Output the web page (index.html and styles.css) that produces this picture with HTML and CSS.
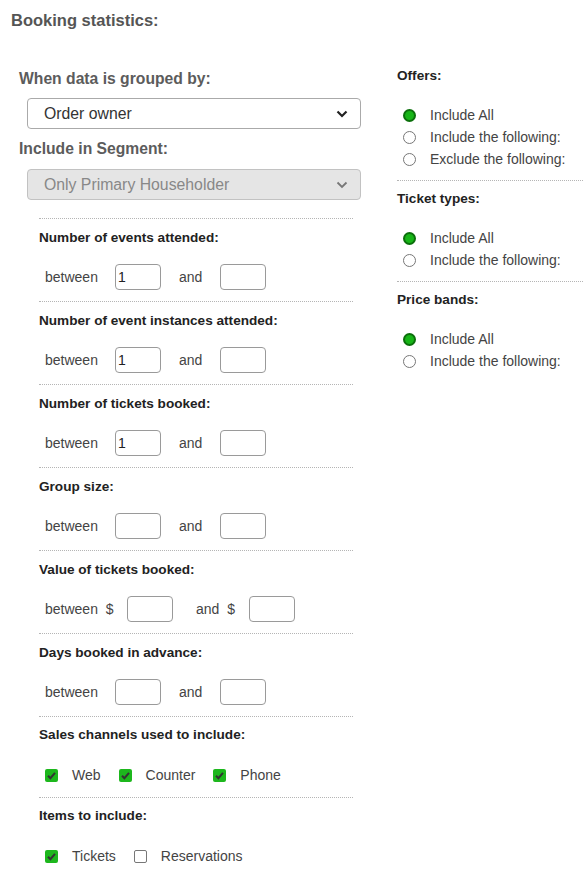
FILE: index.html
```html
<!DOCTYPE html>
<html lang="en">
<head>
  <meta charset="UTF-8">
  <title>Booking statistics</title>
  <meta name="viewport" content="width=device-width, initial-scale=1.0">
  <link rel="stylesheet" href="styles.css">
</head>
<body>
  <div class="page">
    <h2 class="title">Booking statistics:</h2>
    <div class="columns">
      <!-- left: grouping + numeric ranges -->
      <div class="col-main">
        <div class="field-label">When data is grouped by:</div>
        <div class="select">
          <span>Order owner</span>
          <svg class="chev" width="12" height="8" viewBox="0 0 12 8"><path d="M1.5 1.5 L6 6 L10.5 1.5" fill="none" stroke="#222" stroke-width="2.2"/></svg>
        </div>
        <div class="field-label">Include in Segment:</div>
        <div class="select disabled">
          <span>Only Primary Householder</span>
          <svg class="chev" width="12" height="8" viewBox="0 0 12 8"><path d="M1.5 1.5 L6 6 L10.5 1.5" fill="none" stroke="#777" stroke-width="1.8"/></svg>
        </div>

        <div class="criteria">
          <section class="crit">
            <h3>Number of events attended:</h3>
            <div class="range">
              <span class="lbl">between</span>
              <input class="num" type="text" value="1">
              <span class="and">and</span>
              <input class="num" type="text">
            </div>
          </section>
          <section class="crit">
            <h3>Number of event instances attended:</h3>
            <div class="range">
              <span class="lbl">between</span>
              <input class="num" type="text" value="1">
              <span class="and">and</span>
              <input class="num" type="text">
            </div>
          </section>
          <section class="crit">
            <h3>Number of tickets booked:</h3>
            <div class="range">
              <span class="lbl">between</span>
              <input class="num" type="text" value="1">
              <span class="and">and</span>
              <input class="num" type="text">
            </div>
          </section>
          <section class="crit">
            <h3>Group size:</h3>
            <div class="range">
              <span class="lbl">between</span>
              <input class="num" type="text">
              <span class="and">and</span>
              <input class="num" type="text">
            </div>
          </section>
          <section class="crit">
            <h3>Value of tickets booked:</h3>
            <div class="range money">
              <span class="lbl">between <span class="cur">$</span></span>
              <input class="num" type="text">
              <span class="and">and <span class="cur">$</span></span>
              <input class="num" type="text">
            </div>
          </section>
          <section class="crit">
            <h3>Days booked in advance:</h3>
            <div class="range">
              <span class="lbl">between</span>
              <input class="num" type="text">
              <span class="and">and</span>
              <input class="num" type="text">
            </div>
          </section>
          <section class="crit checks">
            <h3>Sales channels used to include:</h3>
            <div class="check-row">
              <span class="cb on"><svg width="13" height="13" viewBox="0 0 13 13"><path d="M3 6.8 L5.4 9.2 L10 3.8" fill="none" stroke="#333" stroke-width="2"/></svg></span>
              <span class="cb-label">Web</span>
              <span class="cb on"><svg width="13" height="13" viewBox="0 0 13 13"><path d="M3 6.8 L5.4 9.2 L10 3.8" fill="none" stroke="#333" stroke-width="2"/></svg></span>
              <span class="cb-label">Counter</span>
              <span class="cb on"><svg width="13" height="13" viewBox="0 0 13 13"><path d="M3 6.8 L5.4 9.2 L10 3.8" fill="none" stroke="#333" stroke-width="2"/></svg></span>
              <span class="cb-label">Phone</span>
            </div>
          </section>
          <section class="crit checks">
            <h3>Items to include:</h3>
            <div class="check-row">
              <span class="cb on"><svg width="13" height="13" viewBox="0 0 13 13"><path d="M3 6.8 L5.4 9.2 L10 3.8" fill="none" stroke="#333" stroke-width="2"/></svg></span>
              <span class="cb-label">Tickets</span>
              <span class="cb"></span>
              <span class="cb-label">Reservations</span>
            </div>
          </section>
        </div>
      </div>

      <!-- right: include/exclude options -->
      <div class="col-side">
        <section class="opt">
          <h3>Offers:</h3>
          <div class="radio-row"><span class="radio on"></span>Include All</div>
          <div class="radio-row"><span class="radio"></span>Include the following:</div>
          <div class="radio-row"><span class="radio"></span>Exclude the following:</div>
        </section>
        <section class="opt">
          <h3>Ticket types:</h3>
          <div class="radio-row"><span class="radio on"></span>Include All</div>
          <div class="radio-row"><span class="radio"></span>Include the following:</div>
        </section>
        <section class="opt">
          <h3>Price bands:</h3>
          <div class="radio-row"><span class="radio on"></span>Include All</div>
          <div class="radio-row"><span class="radio"></span>Include the following:</div>
        </section>
      </div>
    </div>
  </div>
</body>
</html>
```

FILE: styles.css
```css
body {
  margin: 0;
  background: #fff;
  font-family: "Liberation Sans", Arial, sans-serif;
  font-size: 14px;
  color: #444;
}
.page {
  padding: 10px 0 0 11px;
}
.title {
  margin: 0;
  font-size: 16.5px;
  line-height: 20px;
  font-weight: 700;
  color: #555;
}
.columns {
  display: flex;
  margin-top: 36px;
}
.col-main {
  width: 342px;
  margin-left: 8px;
}
.col-side {
  width: 186px;
  margin-left: 36px;
}

/* group-by selects */
.field-label {
  margin-top: 3px;
  font-size: 15.7px;
  line-height: 20px;
  font-weight: 700;
  color: #5c5c5c;
}
.select {
  box-sizing: border-box;
  height: 31px;
  margin: 9px 0 10px 8px;
  padding: 0 12px 0 16px;
  display: flex;
  align-items: center;
  justify-content: space-between;
  border: 1px solid #aaa;
  border-radius: 4px;
  font-size: 15.8px;
  color: #333;
  background: #fff;
}
.select.disabled {
  margin-top: 10px;
  background: #e5e5e5;
  border-color: #c2c2c2;
  color: #888;
}
.field-label + .select + .field-label {
  margin-top: 0;
}

/* criteria blocks */
.criteria {
  margin: 18px 8px 0 20px;
}
.crit {
  border-top: 1px dotted #b5b5b5;
  padding: 9px 0 11px;
}
.crit h3,
.opt h3 {
  margin: 0 0 16px;
  font-size: 13.6px;
  line-height: 20px;
  font-weight: 700;
  color: #222;
}
.range {
  display: flex;
  align-items: center;
  height: 26px;
  padding-left: 6px;
}
.range .lbl {
  width: 70px;
}
.range .and {
  margin-left: 18px;
  width: 41px;
}
.range.money .lbl {
  width: 82px;
}
.range.money .and {
  margin-left: 23px;
  width: 53px;
}
.cur {
  margin-left: 4px;
}
.num {
  box-sizing: border-box;
  width: 46px;
  height: 26px;
  margin: 0;
  padding: 0 2px;
  border: 1px solid #9a9a9a;
  border-radius: 4px;
  font-family: inherit;
  font-size: 14px;
  color: #222;
  background: #fff;
}

/* checkbox rows */
.crit.checks {
  padding: 8px 0 12px;
}
.crit.checks h3 {
  margin-bottom: 20px;
}
.crit.checks:last-child {
  padding-bottom: 0;
}
.check-row {
  display: flex;
  align-items: center;
  height: 20px;
  padding-left: 6px;
}
.cb {
  box-sizing: border-box;
  width: 13px;
  height: 13px;
  margin-right: 14px;
  border: 1px solid #777;
  border-radius: 2px;
  background: #fff;
}
.cb svg {
  display: block;
}
.cb.on {
  border: none;
  background: #1db71d;
}
.cb-label {
  margin-right: 18px;
}

/* option radios */
.opt {
  border-top: 1px dotted #b5b5b5;
  padding: 8px 0 10px;
}
.opt:first-child {
  border-top: none;
  padding-top: 0;
}
.opt h3 {
  margin-bottom: 18px;
}
.radio-row {
  display: flex;
  align-items: center;
  height: 22px;
  padding-left: 6px;
}
.radio {
  box-sizing: border-box;
  width: 13px;
  height: 13px;
  margin-right: 14px;
  border: 1px solid #777;
  border-radius: 50%;
  background: #fff;
}
.radio.on {
  border: 2px solid #0b6f0b;
  background: #17b517;
}
```
